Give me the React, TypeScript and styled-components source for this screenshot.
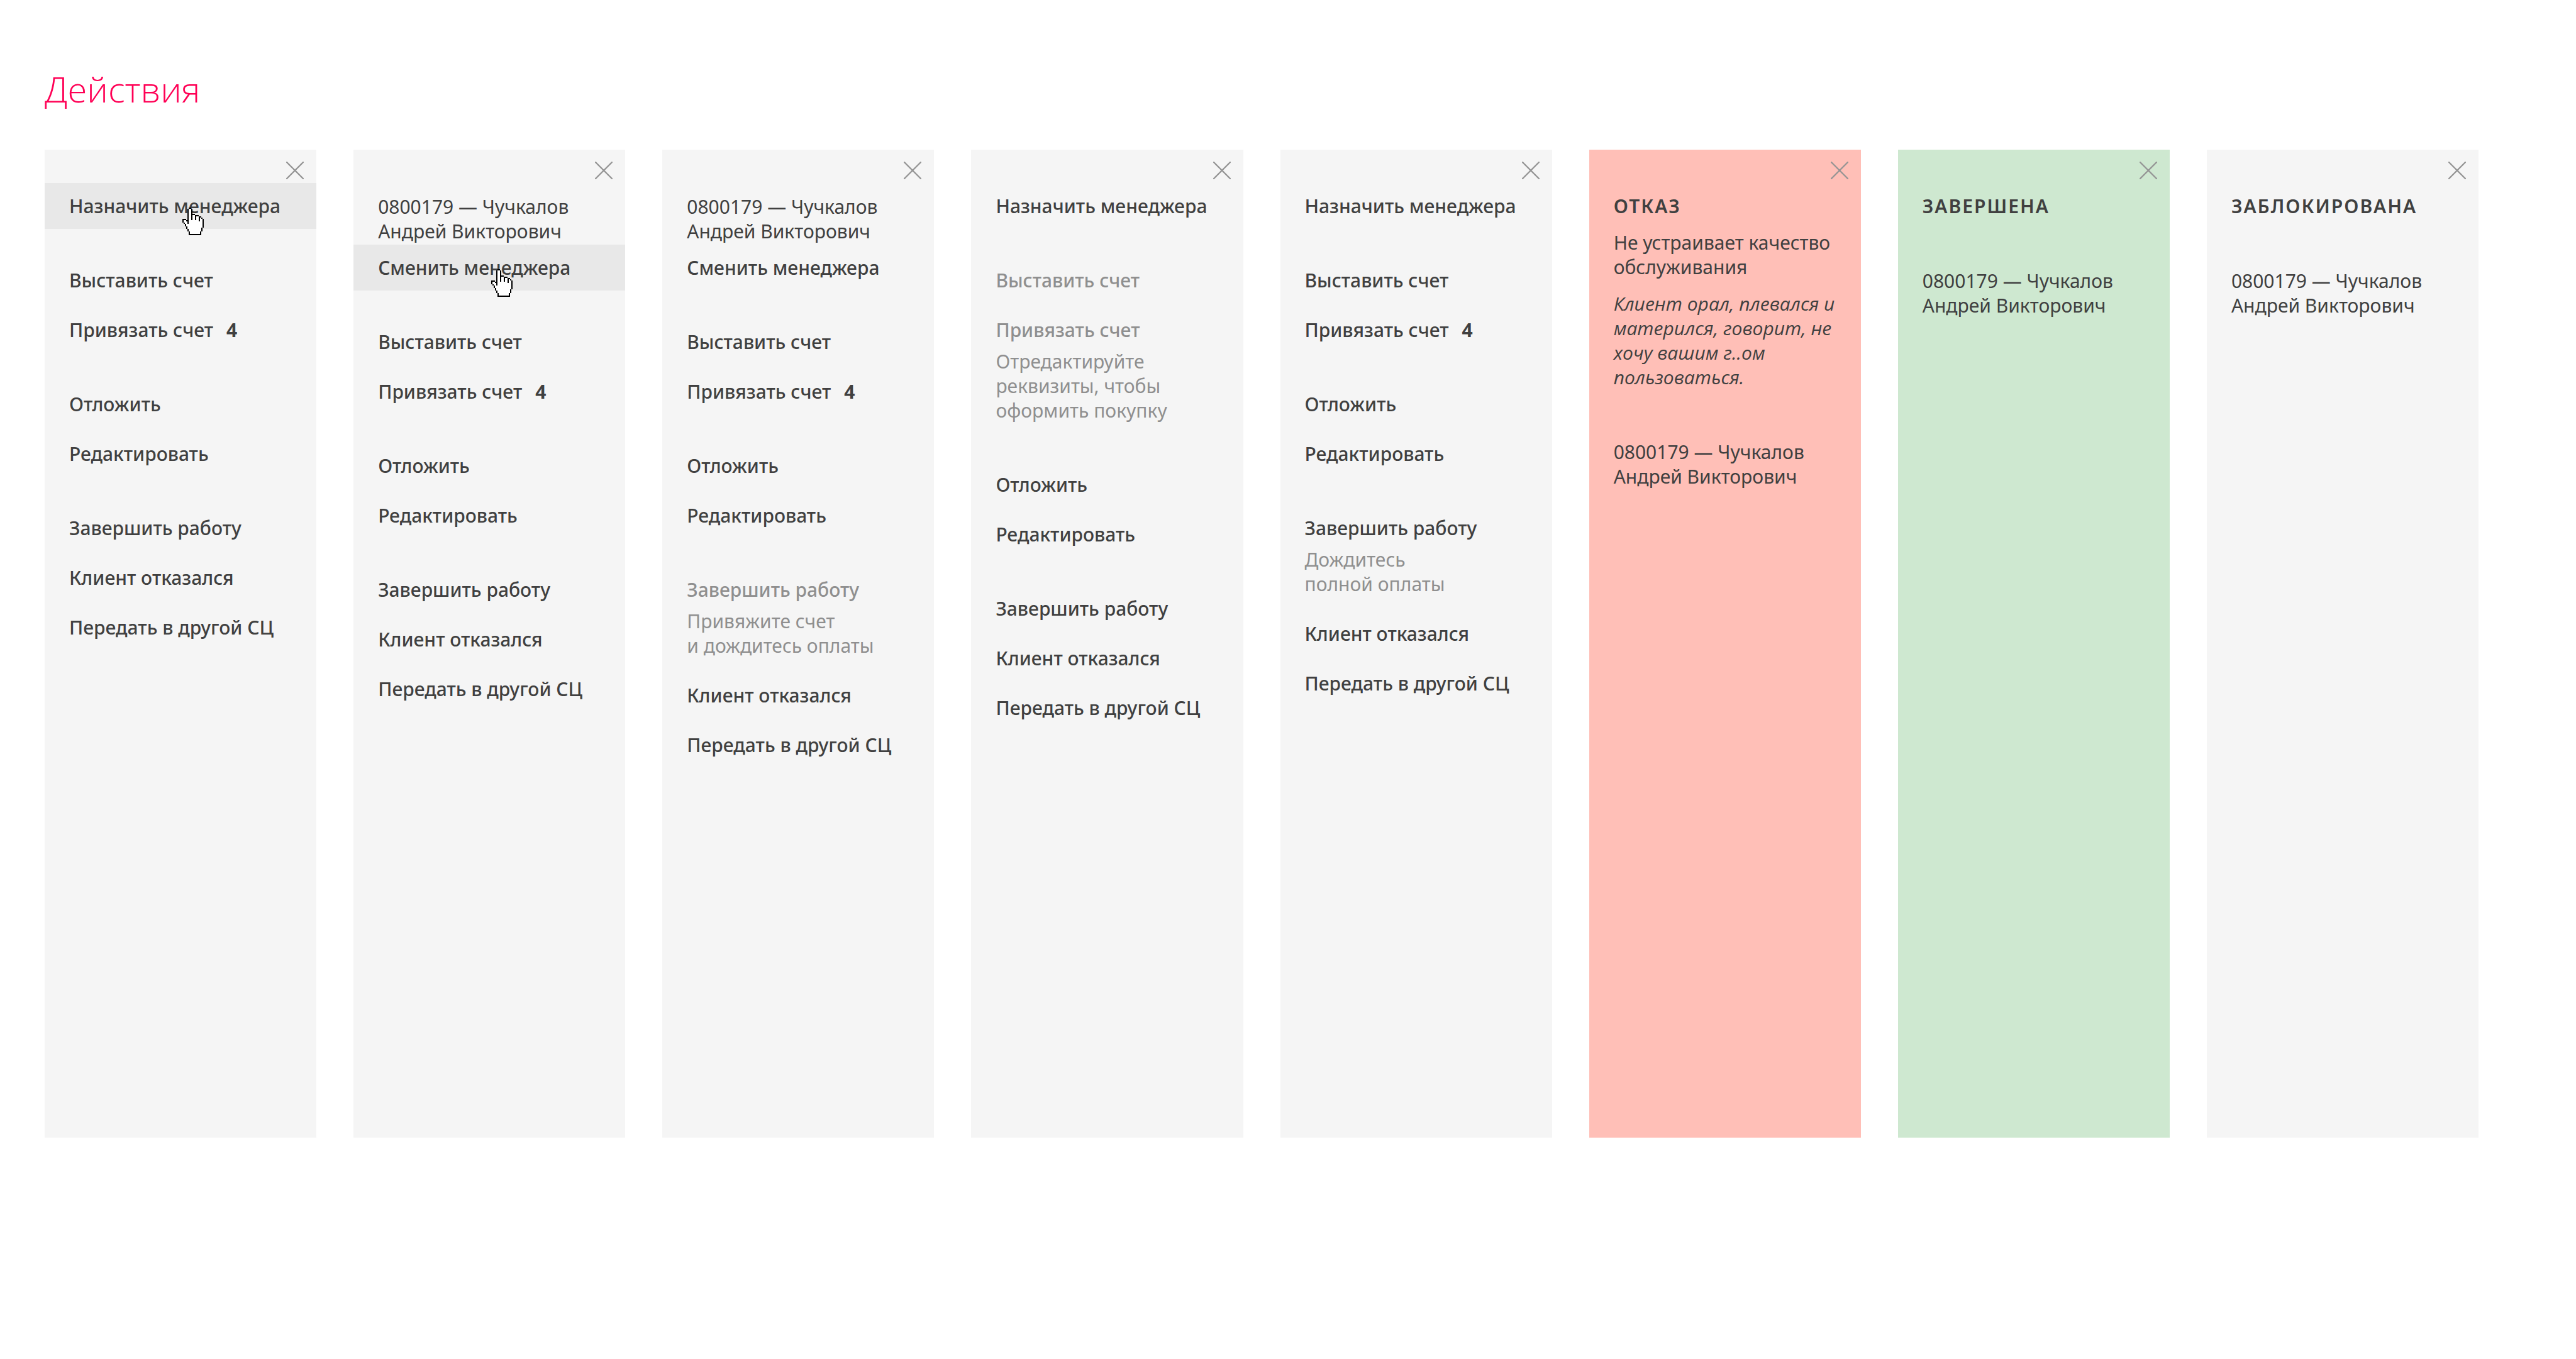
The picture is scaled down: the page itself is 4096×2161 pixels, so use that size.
import React from 'react';
import styled, { createGlobalStyle } from 'styled-components';

type Tone = 'neutral' | 'danger' | 'success';

const tones: Record<Tone, string> = {
  neutral: '#f5f5f5',
  danger: '#ffbfb7',
  success: '#cee8d0',
};

const GlobalStyle = createGlobalStyle`
  *, *::before, *::after { box-sizing: border-box; }
  body {
    margin: 0;
    background: #fff;
    color: #404040;
    font-family: "Noto Sans", "Open Sans", sans-serif;
    font-size: 30px;
    line-height: 39px;
  }
`;

const Page = styled.main`
  display: flex;
  flex-direction: column;
  gap: 57px;
  padding: 101px 155px 79px 71px;
`;

const Title = styled.h1`
  margin: 0;
  color: #ff0055;
  font-family: "Open Sans", "Noto Sans", sans-serif;
  font-size: 56px;
  font-weight: 300;
  line-height: 80px;
`;

const Board = styled.div`
  display: flex;
  align-items: stretch;
  gap: 59px;
  min-height: 1571px;
`;

const Panel = styled.section<{ $tone: Tone }>`
  flex: 1 1 0;
  min-width: 0;
  background: ${(p) => tones[p.$tone]};
`;

const PanelHeader = styled.header`
  display: flex;
  justify-content: flex-end;
  padding: 19px 20px 6px;
`;

const CloseButton = styled.button`
  display: block;
  width: 28px;
  height: 28px;
  padding: 0;
  border: 0;
  background: none;
  color: #949494;
  cursor: pointer;

  svg { display: block; width: 100%; height: 100%; }
`;

const Groups = styled.div`
  display: flex;
  flex-direction: column;
  gap: 45px;
`;

const Group = styled.div`
  display: flex;
  flex-direction: column;
  gap: 6px;
`;

const Entry = styled.div`
  display: flex;
  flex-direction: column;
`;

const Action = styled.button<{ $hovered?: boolean; $muted?: boolean; $noted?: boolean }>`
  position: relative;
  display: flex;
  gap: 21px;
  width: 100%;
  padding: 17px 39px ${(p) => (p.$noted ? 11 : 17)}px;
  border: 0;
  background: ${(p) => (p.$hovered ? '#e8e8e8' : 'none')};
  color: ${(p) => (p.$muted ? '#8f8f8f' : '#404040')};
  font: inherit;
  font-weight: 500;
  text-align: left;
  white-space: nowrap;
  cursor: pointer;
`;

const Count = styled.span`
  font-weight: 700;
`;

const Note = styled.p`
  margin: 0;
  padding: 0 39px 17px;
  color: #8f8f8f;
  white-space: pre-line;
`;

const Manager = styled.p`
  margin: 0;
  padding: 18px 39px 2px;
  white-space: pre-line;
`;

const Summary = styled.div`
  display: flex;
  flex-direction: column;
  gap: 19px;
  padding: 17px 0 17px 39px;
`;

const Status = styled.h2`
  margin: 0;
  font-size: 30px;
  font-weight: 600;
  letter-spacing: 2px;
  text-transform: uppercase;
`;

const Reason = styled.p`
  margin: 0;
  white-space: pre-line;
`;

const Quote = styled(Reason)`
  font-family: "Open Sans", "Noto Sans", sans-serif;
  font-style: italic;
`;

const Pointer = styled.svg`
  position: absolute;
  top: 39px;
  left: 219px;
  z-index: 1;
  width: 34px;
  height: 44px;
  pointer-events: none;
`;

const hand = [
  '.....XX..........',
  '....XooX.........',
  '....XooX.........',
  '....XooX.........',
  '....XooX.........',
  '....XooXXX.......',
  '....XooXooXXX....',
  '....XooXooXooXX..',
  '....XooXooXooXoX.',
  'XXX.XooXooXooXooX',
  'XooXXooooooooXooX',
  'XoooXoooooooooooX',
  '.XooXoooooooooooX',
  '..XoooooooooooooX',
  '..XoooooooooooooX',
  '...XooooooooooooX',
  '...XoooooooooooX.',
  '....XooooooooooX.',
  '....XooooooooooX.',
  '.....XooooooooX..',
  '.....XooooooooX..',
  '.....XXXXXXXXXX..',
];

function HandPointer() {
  return (
    <Pointer viewBox="0 0 17 22" shapeRendering="crispEdges" aria-hidden="true">
      {hand.flatMap((row, y) =>
        [...row].map((cell, x) =>
          cell === '.' ? null : (
            <rect key={`${x}-${y}`} x={x} y={y} width="1" height="1" fill={cell === 'X' ? '#000' : '#fff'} />
          ),
        ),
      )}
    </Pointer>
  );
}

interface Item {
  label: string;
  count?: number;
  note?: string;
  muted?: boolean;
  hovered?: boolean;
}

interface PanelData {
  id: string;
  tone: Tone;
  manager?: string;
  status?: string;
  reason?: string;
  quote?: string;
  groups: Item[][];
}

const manager = '0800179 — Чучкалов\nАндрей Викторович';
const postpone: Item[] = [{ label: 'Отложить' }, { label: 'Редактировать' }];
const billing: Item[] = [{ label: 'Выставить счет' }, { label: 'Привязать счет', count: 4 }];
const closing = (finish?: Partial<Item>): Item[] => [
  { label: 'Завершить работу', ...finish },
  { label: 'Клиент отказался' },
  { label: 'Передать в другой СЦ' },
];

const panels: PanelData[] = [
  {
    id: 'assign-hover',
    tone: 'neutral',
    groups: [[{ label: 'Назначить менеджера', hovered: true }], billing, postpone, closing()],
  },
  {
    id: 'change-hover',
    tone: 'neutral',
    manager,
    groups: [[{ label: 'Сменить менеджера', hovered: true }], billing, postpone, closing()],
  },
  {
    id: 'awaiting-bill',
    tone: 'neutral',
    manager,
    groups: [
      [{ label: 'Сменить менеджера' }],
      billing,
      postpone,
      closing({ muted: true, note: 'Привяжите счет\nи дождитесь оплаты' }),
    ],
  },
  {
    id: 'missing-details',
    tone: 'neutral',
    groups: [
      [{ label: 'Назначить менеджера' }],
      [
        { label: 'Выставить счет', muted: true },
        { label: 'Привязать счет', muted: true, note: 'Отредактируйте\nреквизиты, чтобы\nоформить покупку' },
      ],
      postpone,
      closing(),
    ],
  },
  {
    id: 'awaiting-payment',
    tone: 'neutral',
    groups: [
      [{ label: 'Назначить менеджера' }],
      billing,
      postpone,
      closing({ note: 'Дождитесь\nполной оплаты' }),
    ],
  },
  {
    id: 'refused',
    tone: 'danger',
    status: 'Отказ',
    reason: 'Не устраивает качество\nобслуживания',
    quote: 'Клиент орал, плевался и\nматерился, говорит, не\nхочу вашим г..ом\nпользоваться.',
    manager,
    groups: [],
  },
  { id: 'finished', tone: 'success', status: 'Завершена', manager, groups: [] },
  { id: 'blocked', tone: 'neutral', status: 'Заблокирована', manager, groups: [] },
];

function ActionEntry({ item }: { item: Item }) {
  return (
    <Entry>
      <Action type="button" $hovered={item.hovered} $muted={item.muted} $noted={!!item.note}>
        {item.label}
        {item.count !== undefined && <Count>{item.count}</Count>}
        {item.hovered && <HandPointer />}
      </Action>
      {item.note && <Note>{item.note}</Note>}
    </Entry>
  );
}

function ActionPanel({ panel }: { panel: PanelData }) {
  return (
    <Panel $tone={panel.tone}>
      <PanelHeader>
        <CloseButton type="button" aria-label="Закрыть">
          <svg viewBox="0 0 28 28" fill="none" stroke="currentColor" strokeWidth="2.3" strokeLinecap="round">
            <path d="M1 1 27 27M27 1 1 27" />
          </svg>
        </CloseButton>
      </PanelHeader>
      {panel.status ? (
        <Groups>
          <Summary>
            <Status>{panel.status}</Status>
            {panel.reason && <Reason>{panel.reason}</Reason>}
            {panel.quote && <Quote>{panel.quote}</Quote>}
          </Summary>
          <Manager>{panel.manager}</Manager>
        </Groups>
      ) : (
        <>
          {panel.manager && <Manager>{panel.manager}</Manager>}
          <Groups>
            {panel.groups.map((items, i) => (
              <Group key={i}>
                {items.map((item) => (
                  <ActionEntry key={item.label} item={item} />
                ))}
              </Group>
            ))}
          </Groups>
        </>
      )}
    </Panel>
  );
}

export default function App() {
  return (
    <>
      <GlobalStyle />
      <Page>
        <Title>Действия</Title>
        <Board>
          {panels.map((panel) => (
            <ActionPanel key={panel.id} panel={panel} />
          ))}
        </Board>
      </Page>
    </>
  );
}
